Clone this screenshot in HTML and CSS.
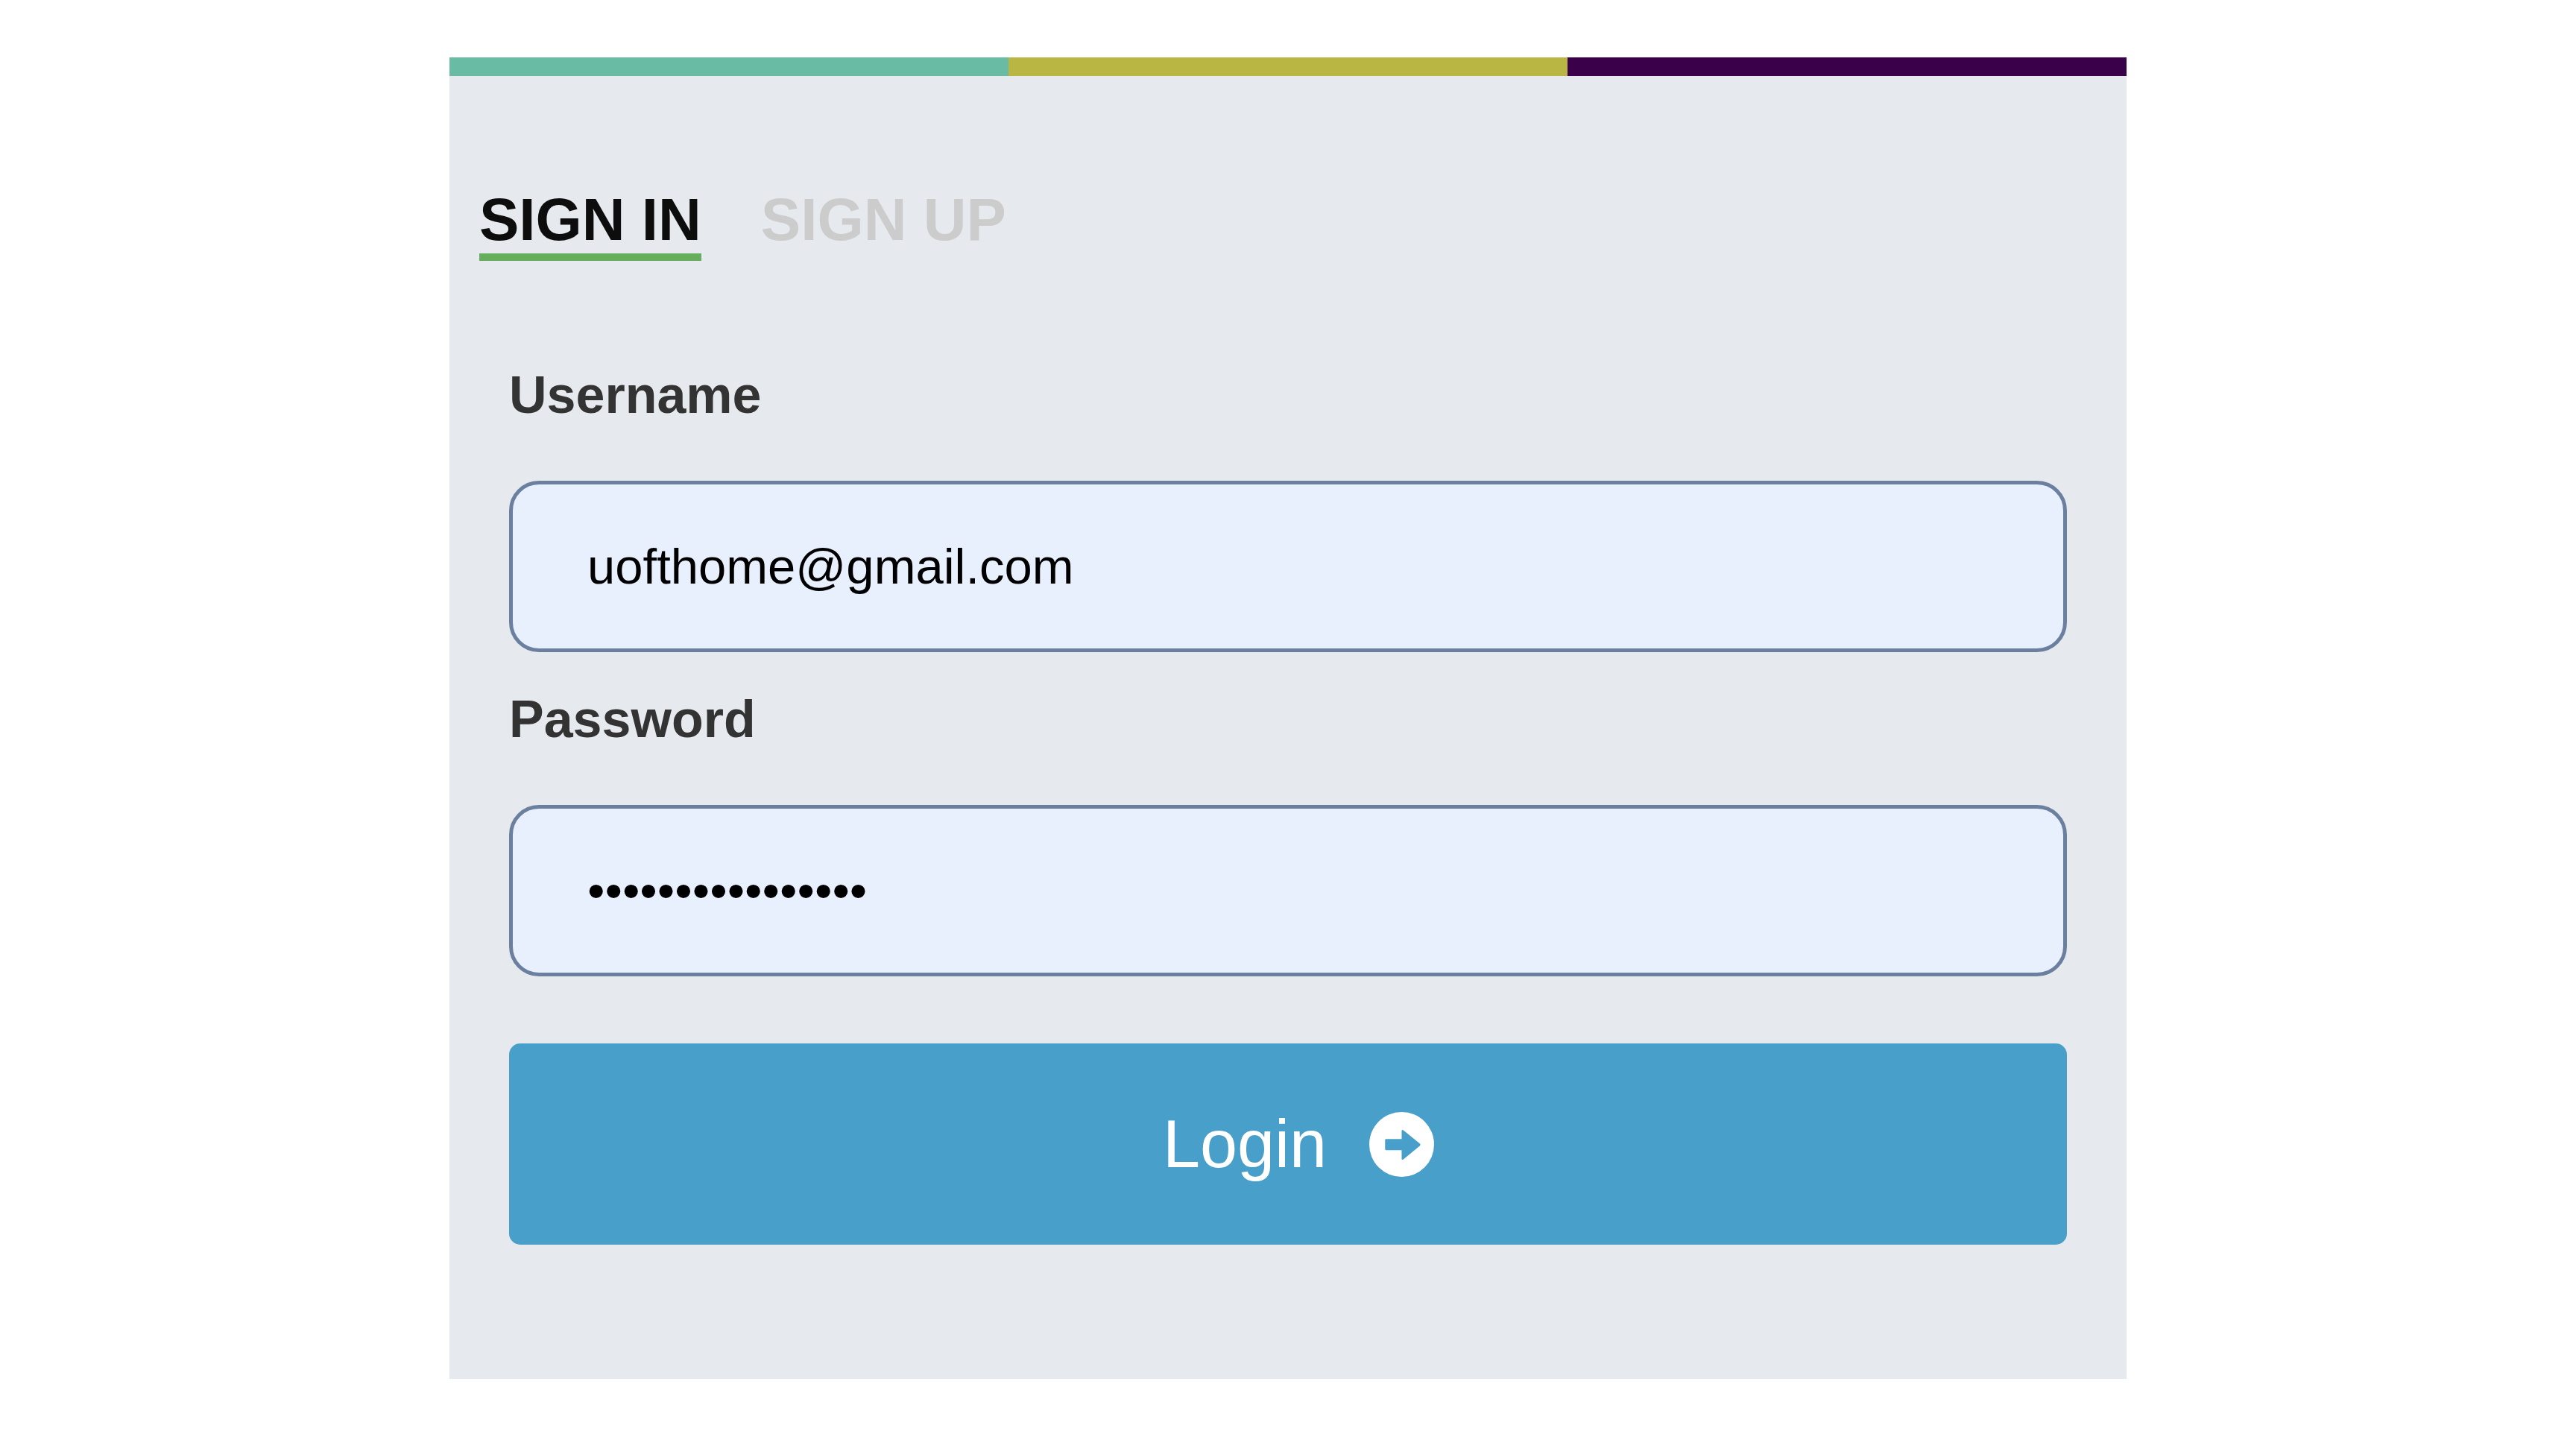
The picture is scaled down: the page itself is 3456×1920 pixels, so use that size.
FILE: index.html
```html
<!DOCTYPE html>
<html lang="en">
<head>
  <meta charset="utf-8">
  <meta name="viewport" content="width=device-width, initial-scale=1">
  <title>Sign in</title>
  <link rel="stylesheet" href="styles.css">
</head>
<body>
  <main class="panel">
    <div class="stripes" aria-hidden="true">
      <span class="stripe stripe-teal"></span>
      <span class="stripe stripe-olive"></span>
      <span class="stripe stripe-purple"></span>
    </div>
    <div class="panel-body">
      <nav class="tabs">
        <a class="tab tab-active" href="#signin" aria-current="page">SIGN IN</a>
        <a class="tab" href="#signup">SIGN UP</a>
      </nav>
      <form class="form" id="signin">
        <div class="field">
          <label class="label" for="username">Username</label>
          <input class="input" id="username" name="username" type="text" value="uofthome@gmail.com" autocomplete="username">
        </div>
        <div class="field">
          <label class="label" for="password">Password</label>
          <input class="input" id="password" name="password" type="password" value="correcthorse1234" autocomplete="current-password">
        </div>
        <button class="login" type="submit">
          <span>Login</span>
          <svg class="login-icon" viewBox="0 0 262 262" aria-hidden="true">
            <circle class="icon-disc" cx="131" cy="131" r="131"/>
            <path class="icon-arrow" d="M68 109H131V76Q132 70 138 74L204 127Q209 132 204 137L138 191Q132 195 131 189V154H68Q64 154 64 150V113Q64 109 68 109Z"/>
          </svg>
        </button>
      </form>
    </div>
  </main>
</body>
</html>
```
FILE: styles.css
```css
*,
*::before,
*::after {
  box-sizing: border-box;
}

body {
  margin: 0;
  padding: 77px 40px 70px;
  background: #fff;
  font-family: "Liberation Sans", Arial, Helvetica, sans-serif;
}

.panel {
  max-width: 2250px;
  margin: 0 auto;
  background: #e6e9ed;
}

.stripes {
  display: grid;
  grid-template-columns: repeat(3, 1fr);
}

.stripe {
  height: 25px;
}

.stripe-teal {
  background: #6abba4;
}

.stripe-olive {
  background: #b9b643;
}

.stripe-purple {
  background: #3b004a;
}

.panel-body {
  padding: 148px 40px 180px;
}

.tabs {
  display: flex;
  gap: 80px;
}

.tab {
  border-bottom: 10px solid transparent;
  color: #ccc;
  font-size: 80px;
  font-weight: 700;
  line-height: 90px;
  text-decoration: none;
}

.tab-active {
  border-bottom-color: #67ae5c;
  color: #0d0d0d;
}

.form {
  display: flex;
  flex-direction: column;
  gap: 50px;
  padding: 140px 40px 0;
}

.field {
  display: flex;
  flex-direction: column;
  gap: 75px;
}

.label {
  color: #333;
  font-size: 70px;
  font-weight: 700;
  line-height: 80px;
}

.input {
  width: 100%;
  margin: 0;
  padding: 70px 100px;
  border: 5px solid #6b809f;
  border-radius: 40px;
  background: #e8effd;
  color: #000;
  font-family: inherit;
  font-size: 67px;
  line-height: 80px;
}

.login {
  display: flex;
  align-items: center;
  justify-content: center;
  gap: 57px;
  margin: 40px 0 0;
  padding: 80px 0 80px 28px;
  border: 0;
  border-radius: 15px;
  background: #489fc9;
  color: #fff;
  font-family: inherit;
  font-size: 90px;
  line-height: 110px;
}

.login-icon {
  width: 87px;
  height: 87px;
}

.icon-disc {
  fill: #fff;
}

.icon-arrow {
  fill: #489fc9;
}
```
